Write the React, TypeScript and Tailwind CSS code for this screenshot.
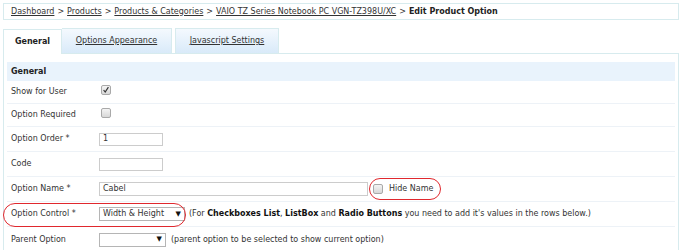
import React from "react";

const font = { fontFamily: '"DejaVu Sans", Verdana, sans-serif' };

function Check({ checked }: { checked?: boolean }) {
  return (
    <span className="relative inline-block w-[10px] h-[10px] rounded-[2px] border border-[#a9a9a9] bg-gradient-to-b from-[#f4f4f4] to-[#d8d8d8]">
      {checked && (
        <svg viewBox="0 0 10 10" className="absolute left-0 top-0 w-[8px] h-[8px]">
          <path d="M2 5 L4 7.5 L8 1.5" stroke="#333" strokeWidth="1.5" fill="none" />
        </svg>
      )}
    </span>
  );
}

function Row({ label, h, children, last }: { label: string; h: string; children?: React.ReactNode; last?: boolean }) {
  return (
    <div className={`flex items-center ${h} ${last ? "" : "border-b border-[#edf2f7]"}`}>
      <div className="w-[92px] pl-[4px]">{label}</div>
      <div className="flex items-center flex-1">{children}</div>
    </div>
  );
}

function Select({ w, value }: { w: string; value?: string }) {
  return (
    <div className={`${w} h-[14px] border border-[#b5b5b5] bg-white flex items-center justify-between pl-[3px] pr-[3px]`}>
      <span>{value}</span>
      <span className="text-[7px] text-[#111]">▼</span>
    </div>
  );
}

export default function App() {
  return (
    <div className="w-[682px] h-[250px] bg-white text-[8px] text-[#333] overflow-hidden" style={font}>
      <div className="mx-[3px] mt-[3px] h-[17px] border border-[#d7ebee] flex items-center pl-[7px]">
        <a className="underline text-[#333]">Dashboard</a>
        <span className="mx-[3px]">&gt;</span>
        <a className="underline">Products</a>
        <span className="mx-[3px]">&gt;</span>
        <a className="underline">Products &amp; Categories</a>
        <span className="mx-[3px]">&gt;</span>
        <a className="underline">VAIO TZ Series Notebook PC VGN-TZ398U/XC</a>
        <span className="mx-[3px]">&gt;</span>
        <b className="text-[#222]">Edit Product Option</b>
      </div>
      <div className="mx-[3px] mt-[8px] flex h-[25px] items-stretch">
        <div className="w-[59px] border-l border-t border-r border-[#d7ebee] bg-white flex items-center justify-center font-bold text-[#222] relative top-[1px]">General</div>
        <div className="w-[110px] border-t border-r border-[#d7ebee] bg-gradient-to-b from-[#f4f9fe] to-[#d9eaf9] flex items-center justify-center underline">Options Appearance</div>
        <div className="ml-[3px] w-[104px] border-t border-l border-r border-[#d7ebee] bg-gradient-to-b from-[#f4f9fe] to-[#d9eaf9] flex items-center justify-center underline">Javascript Settings</div>
      </div>
      <div className="mx-[3px] w-[676px] h-[200px] border border-[#d7ebee] px-[3px] pt-[8px]">
        <div className="h-[19px] bg-[#e9f3fc] flex items-center pl-[4px] font-bold text-[#222]">General</div>
        <Row label="Show for User" h="h-[23px]"><span className="ml-[2px]"><Check checked /></span></Row>
        <Row label="Option Required" h="h-[23px]"><span className="ml-[2px]"><Check /></span></Row>
        <Row label="Option Order *" h="h-[25px]">
          <div className="w-[64px] h-[13px] border border-[#ccc] flex items-center pl-[3px]">1</div>
        </Row>
        <Row label="Code" h="h-[25px]">
          <div className="w-[64px] h-[13px] border border-[#ccc]" />
        </Row>
        <Row label="Option Name *" h="h-[25px]">
          <div className="w-[269px] h-[14px] border border-[#ccc] flex items-center pl-[3px]">Cabel</div>
          <div className="relative ml-[1px] flex items-center h-[22px] pl-[4px] pr-[8px]">
            <span className="absolute inset-0 rounded-full border-[1.5px] border-[#e0282e]" />
            <Check />
            <span className="ml-[6px]">Hide Name</span>
          </div>
        </Row>
        <div className="relative">
          <span className="absolute left-[-4px] top-[1px] w-[183px] h-[24px] rounded-full border-[1.5px] border-[#e0282e]" />
          <Row label="Option Control *" h="h-[25px]">
            <Select w="w-[86px]" value="Width & Height" />
            <span className="ml-[4px] whitespace-nowrap">
              (For <b className="text-[#111]">Checkboxes List</b>, <b className="text-[#111]">ListBox</b> and <b className="text-[#111]">Radio Buttons</b> you need to add it's values in the rows below.)
            </span>
          </Row>
        </div>
        <Row label="Parent Option" h="h-[25px]" last>
          <Select w="w-[67px]" />
          <span className="ml-[5px]">(parent option to be selected to show current option)</span>
        </Row>
      </div>
    </div>
  );
}
